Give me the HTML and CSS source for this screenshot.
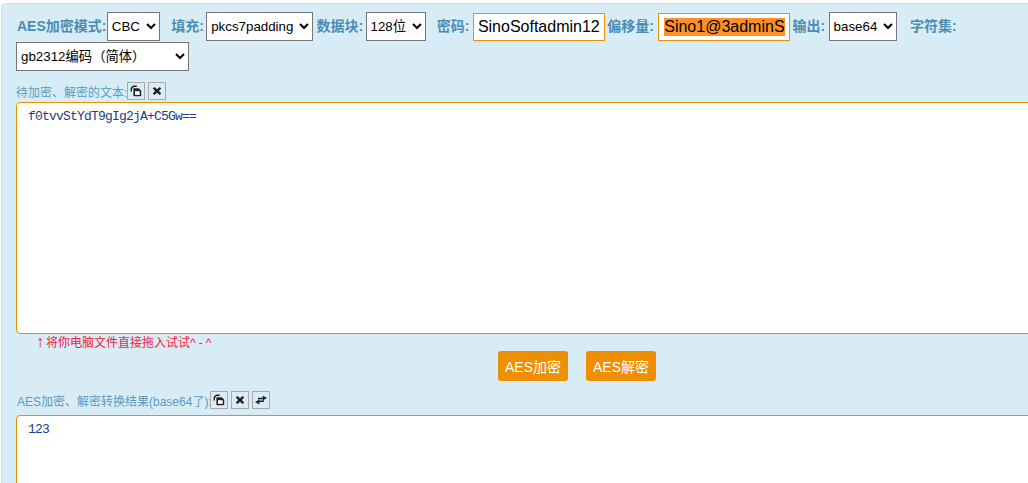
FILE: index.html
```html
<!DOCTYPE html>
<html lang="zh">
<head>
<meta charset="utf-8">
<title>AES加密</title>
<link rel="stylesheet" href="styles.css">
</head>
<body>
<main class="panel">
  <form class="options">
    <label class="opt lead">AES加密模式:</label>
    <select class="sel w-cbc"><option>CBC</option></select>
    <label class="opt gap-l tight-r">填充:</label>
    <select class="sel w-pad"><option>pkcs7padding</option></select>
    <label class="opt tight-r">数据块:</label>
    <select class="sel w-blk"><option>128位</option></select>
    <label class="opt gap-l">密码:</label>
    <input class="key" type="text" value="SinoSoftadmin12">
    <label class="opt tight-l loose-r">偏移量:</label>
    <span class="key iv"><span class="picked">Sino1@3adminS</span></span>
    <label class="opt tight-l">输出:</label>
    <select class="sel w-out"><option>base64</option></select>
    <label class="opt gap-xl">字符集:</label>
    <select class="sel charset"><option>gb2312编码（简体）</option></select>
  </form>

  <div class="caption">
    <span>待加密、解密的文本:</span>
    <button class="tool" type="button" aria-label="复制"><svg viewBox="0 0 12 12"><use href="#i-copy"/></svg></button>
    <button class="tool" type="button" aria-label="清空"><svg viewBox="0 0 12 12"><use href="#i-x"/></svg></button>
  </div>
  <textarea class="box src">f0tvvStYdT9gIg2jA+C5Gw==</textarea>
  <p class="tip"><span class="arrow">↑</span>将你电脑文件直接拖入试试<span class="smile">^-^</span></p>
  <div class="actions">
    <button class="go" type="button">AES加密</button>
    <button class="go" type="button">AES解密</button>
  </div>
  <div class="caption caption-result">
    <span>AES加密、解密转换结果(base64了):</span>
    <button class="tool" type="button" aria-label="复制"><svg viewBox="0 0 12 12"><use href="#i-copy"/></svg></button>
    <button class="tool" type="button" aria-label="清空"><svg viewBox="0 0 12 12"><use href="#i-x"/></svg></button>
    <button class="tool" type="button" aria-label="交换"><svg viewBox="0 0 12 12"><use href="#i-swap"/></svg></button>
  </div>
  <textarea class="box out">123</textarea>
</main>
<svg class="defs" aria-hidden="true">
  <symbol id="i-copy" viewBox="0 0 12 12">
    <path d="M.6 6.5V3L3 .6H6.8V2H3.8L2 3.8V6.5Z" fill="#222"/>
    <path d="M3.4 3.2H8.6L11.2 5.4V10.2L10.2 11.2H4.4L3.4 10.2Z" fill="#222"/>
    <path d="M5 6.2H9.7V9.9H5Z" fill="#fff"/>
  </symbol>
  <symbol id="i-x" viewBox="0 0 12 12">
    <path d="M3.3 2 6 4.2 8.7 2 10.2 3.6 7.9 6 10.2 8.4 8.7 10 6 7.8 3.3 10 1.8 8.4 4.1 6 1.8 3.6Z" fill="#222"/>
  </symbol>
  <symbol id="i-swap" viewBox="0 0 14 12">
    <path d="M3.5 3.4H9V.8L14 3.6 9 6.6V5.2H4.6L3.5 6Z" fill="#222"/>
    <path d="M10.5 8.2H5.2V11.2L0 8.2 5.2 5.4V6.6H9.4L10.5 5.9Z" fill="#222"/>
  </symbol>
</svg>
</body>
</html>
```
FILE: styles.css
```css
html, body {
  margin: 0;
  height: 483px;
  overflow: hidden;
  background: #fff;
}
body {
  font-family: "Liberation Sans", "Noto Sans CJK SC", sans-serif;
  font-size: 12px;
}
.panel {
  box-sizing: border-box;
  width: 1152px;
  height: 600px;
  margin: 3px 0 0 1px;
  padding: 7px 14px 0;
  background: #d8ecf6;
  border: 1px solid #c5e2ee;
  border-radius: 4px;
}
.options {
  width: 1090px;
  line-height: 30px;
}
.opt {
  font-size: 14px;
  font-weight: bold;
  color: #4a8cb4;
  vertical-align: -1px;
}
.lead {
  margin-left: 1px;
  margin-right: -3px;
}
.gap-l { margin-left: 8px; }
.gap-xl { margin-left: 10px; }
.tight-r { margin-right: -1px; }
.tight-l { margin-left: -1px; }
.loose-r { margin-right: 1px; }
.sel {
  box-sizing: border-box;
  height: 29px;
  font-family: inherit;
  font-size: 13.33px;
  vertical-align: middle;
  background: #fff;
}
.w-cbc { width: 53px; }
.w-pad { width: 107px; }
.w-blk { width: 60px; }
.w-out { width: 68px; }
.charset {
  display: block;
  width: 173px;
  margin-top: 1px;
}
.key {
  display: inline-block;
  box-sizing: border-box;
  width: 132px;
  height: 28px;
  padding: 0 4px;
  border: 1px solid #ed8f00;
  background: #fff;
  font-family: inherit;
  font-size: 16px;
  line-height: 26px;
  color: #000;
  vertical-align: middle;
  outline: none;
}
.iv {
  padding: 0 5px;
  overflow: hidden;
  white-space: nowrap;
}
.picked {
  display: inline-block;
  background: #ff9029;
  line-height: 18px;
  vertical-align: 0;
}
.caption {
  display: flex;
  align-items: center;
  gap: 3px;
  height: 18px;
  color: #5b9ac0;
  font-size: 12px;
}
.options + .caption { margin-top: 11px; }
.caption span { margin-right: -3px; }
.caption-result span {
  margin-left: 1px;
  margin-right: -5px;
}
.tool {
  display: flex;
  align-items: center;
  justify-content: center;
  box-sizing: border-box;
  width: 18px;
  height: 18px;
  padding: 0;
  border: 1px solid #aaa;
  background: transparent;
}
.tool svg {
  width: 12px;
  height: 12px;
}
.box {
  display: block;
  box-sizing: border-box;
  width: 1122px;
  padding: 7px 11px;
  border: 1px solid #ed8f00;
  border-radius: 4px;
  background: #fff;
  color: #1a3c8c;
  font-family: "Liberation Mono", monospace;
  font-size: 13px;
  letter-spacing: -0.8px;
  line-height: 14px;
  resize: none;
  outline: none;
}
.src {
  height: 232px;
  margin-top: 2px;
}
.out {
  height: 200px;
  margin-top: 6px;
}
.tip {
  margin: 0 0 0 20px;
  height: 16px;
  font-size: 12px;
  line-height: 16px;
  color: #f5203c;
}
.arrow {
  margin-right: 2px;
  font-size: 16px;
}
.smile { letter-spacing: 3px; }
.actions {
  display: flex;
  justify-content: center;
  gap: 18px;
  margin-top: 1px;
  height: 40px;
}
.go {
  width: 70px;
  height: 30px;
  padding: 0;
  border: 0;
  border-radius: 3px;
  background: #ed8f00;
  color: #fff;
  font-family: inherit;
  font-size: 14px;
}
.defs {
  position: absolute;
  width: 0;
  height: 0;
}
```
